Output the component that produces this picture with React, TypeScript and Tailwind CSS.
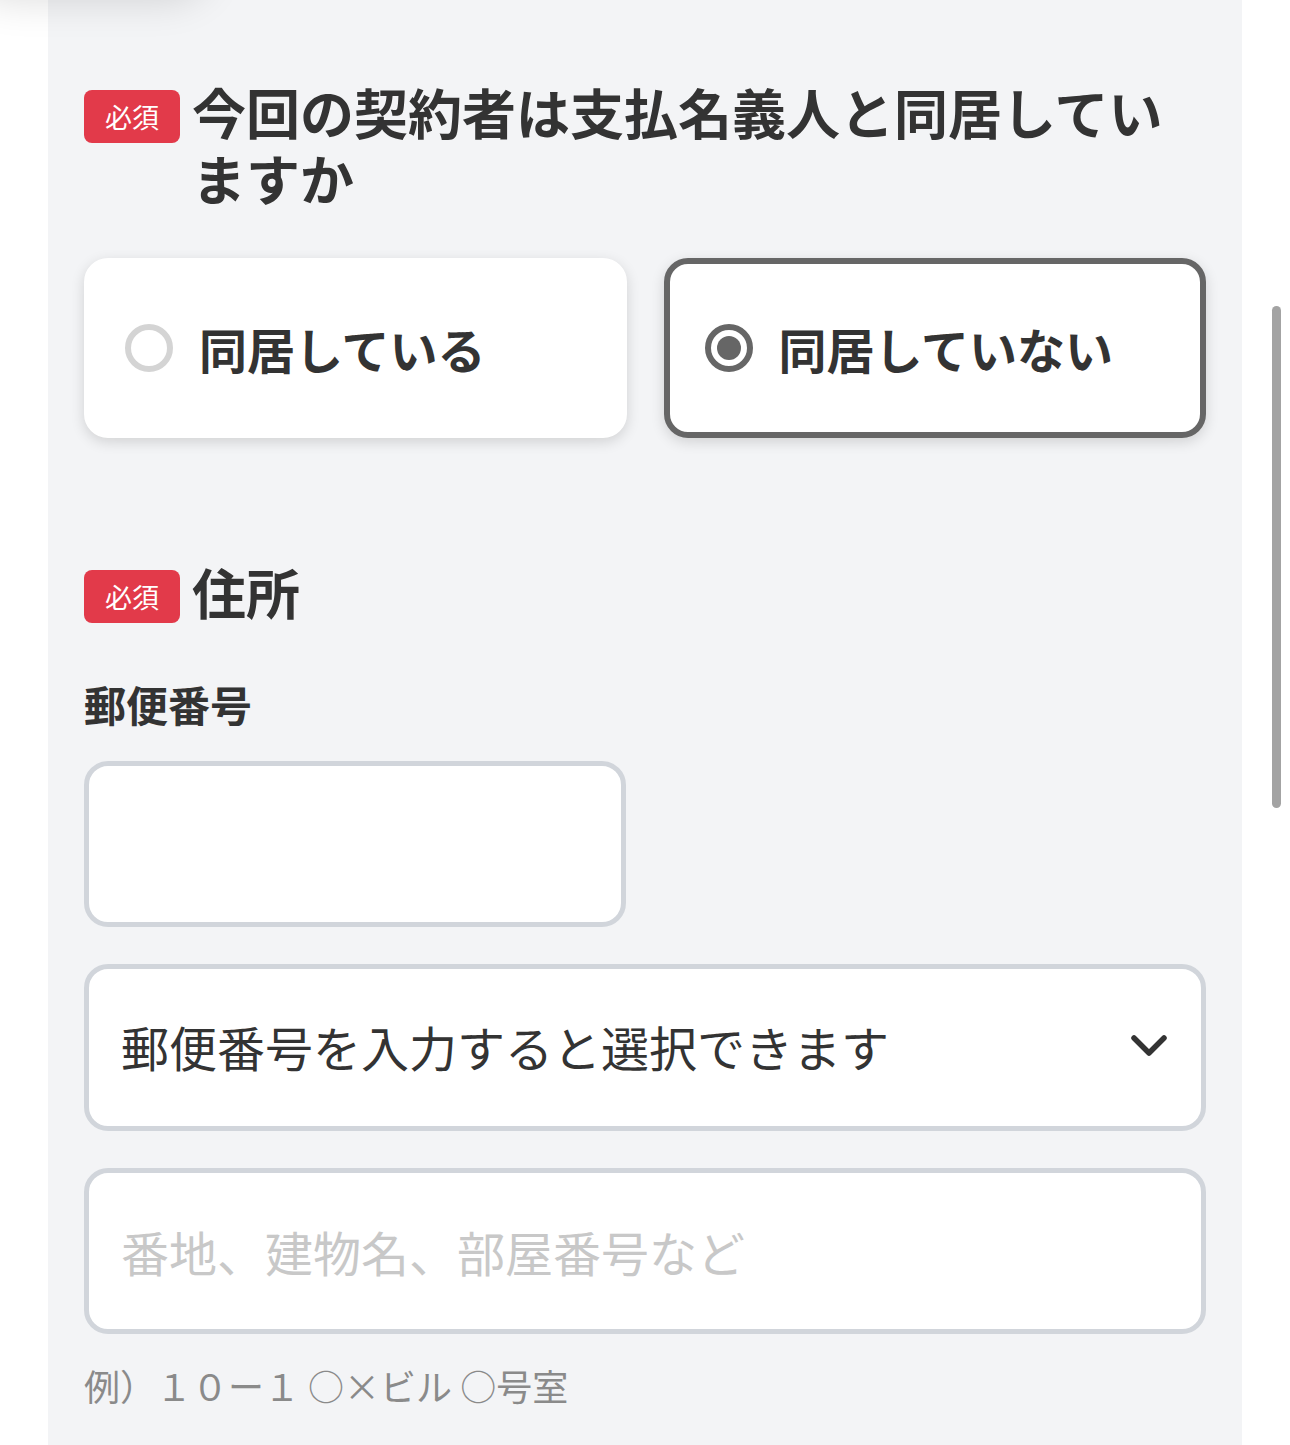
import React from "react";

const font = { fontFamily: '"Noto Sans CJK JP", "Noto Sans", sans-serif' };

function Badge() {
  return (
    <span className="mt-[11px] flex h-[53px] w-[96px] shrink-0 items-center justify-center rounded-[8px] bg-[#e23a4a] text-[27px] leading-none text-white">
      必須
    </span>
  );
}

function Radio({ checked }: { checked: boolean }) {
  return checked ? (
    <span className="flex h-[48px] w-[48px] shrink-0 items-center justify-center rounded-full border-[6px] border-[#666666] bg-white">
      <span className="h-[24px] w-[24px] rounded-full bg-[#666666]" />
    </span>
  ) : (
    <span className="h-[48px] w-[48px] shrink-0 rounded-full border-[6px] border-[#d4d4d4] bg-white" />
  );
}

function Choice({ label, checked }: { label: string; checked: boolean }) {
  return (
    <div
      className={
        "flex h-[180px] items-center gap-[26px] rounded-[24px] border-[6px] bg-white pl-[35px] shadow-[0_4px_14px_rgba(0,0,0,0.14)] " +
        (checked ? "border-[#666666]" : "border-white")
      }
    >
      <Radio checked={checked} />
      <span className="text-[48px] font-bold leading-none text-[#333333]">{label}</span>
    </div>
  );
}

export default function App() {
  return (
    <div className="relative min-h-[1445px] w-[1290px] overflow-hidden bg-white" style={font}>
      <div className="pointer-events-none absolute left-[-30px] top-[-110px] h-[110px] w-[240px] rounded-[40px] shadow-[0_0_40px_rgba(0,0,0,0.14)]" />
      <div className="ml-[48px] min-h-[1445px] w-[1194px] bg-[#f3f4f6] px-[36px] pt-[79px]">
        {/* Question 1 */}
        <div className="flex items-start gap-[12px]">
          <Badge />
          <h2 className="text-[54px] font-bold leading-[66px] text-[#333333]">
            今回の契約者は支払名義人と同居していますか
          </h2>
        </div>

        <div className="mt-[47px] grid grid-cols-2 gap-[37px]">
          <Choice label="同居している" checked={false} />
          <Choice label="同居していない" checked={true} />
        </div>

        {/* Address */}
        <div className="mt-[121px] flex items-start gap-[12px]">
          <Badge />
          <h2 className="text-[54px] font-bold leading-[66px] text-[#333333]">住所</h2>
        </div>

        <div className="mt-[51px] text-[42px] font-bold leading-[56px] text-[#333333]">郵便番号</div>

        <input
          type="text"
          className="mt-[29px] block h-[166px] w-[542px] rounded-[24px] border-[5px] border-[#d1d5db] bg-white px-[32px] text-[48px] text-[#333333] outline-none"
          style={font}
        />

        <div className="mt-[37px] flex h-[167px] w-full items-center justify-between rounded-[24px] border-[5px] border-[#d1d5db] bg-white pl-[32px] pr-[32px]">
          <span className="-mt-[4px] text-[48px] leading-none text-[#333333]">郵便番号を入力すると選択できます</span>
          <svg width="40" height="26" viewBox="0 0 40 26" fill="none" className="-mt-[4px]">
            <polyline
              points="5,5 20,20 35,5"
              stroke="#333333"
              strokeWidth="5.5"
              strokeLinecap="round"
              strokeLinejoin="round"
            />
          </svg>
        </div>

        <input
          type="text"
          placeholder="番地、建物名、部屋番号など"
          className="mt-[37px] block h-[166px] w-full rounded-[24px] border-[5px] border-[#d1d5db] bg-white px-[32px] text-[48px] text-[#333333] outline-none placeholder:text-[#c8c8c8]"
          style={font}
        />

        <div className="mt-[24px] text-[36px] leading-[54px] text-[#8a8a8a]">例）１０ー１ ○×ビル ○号室</div>
      </div>

      {/* scrollbar */}
      <div className="absolute left-[1272px] top-[306px] h-[502px] w-[9px] rounded-full bg-[#a3a3a3]" />
    </div>
  );
}
